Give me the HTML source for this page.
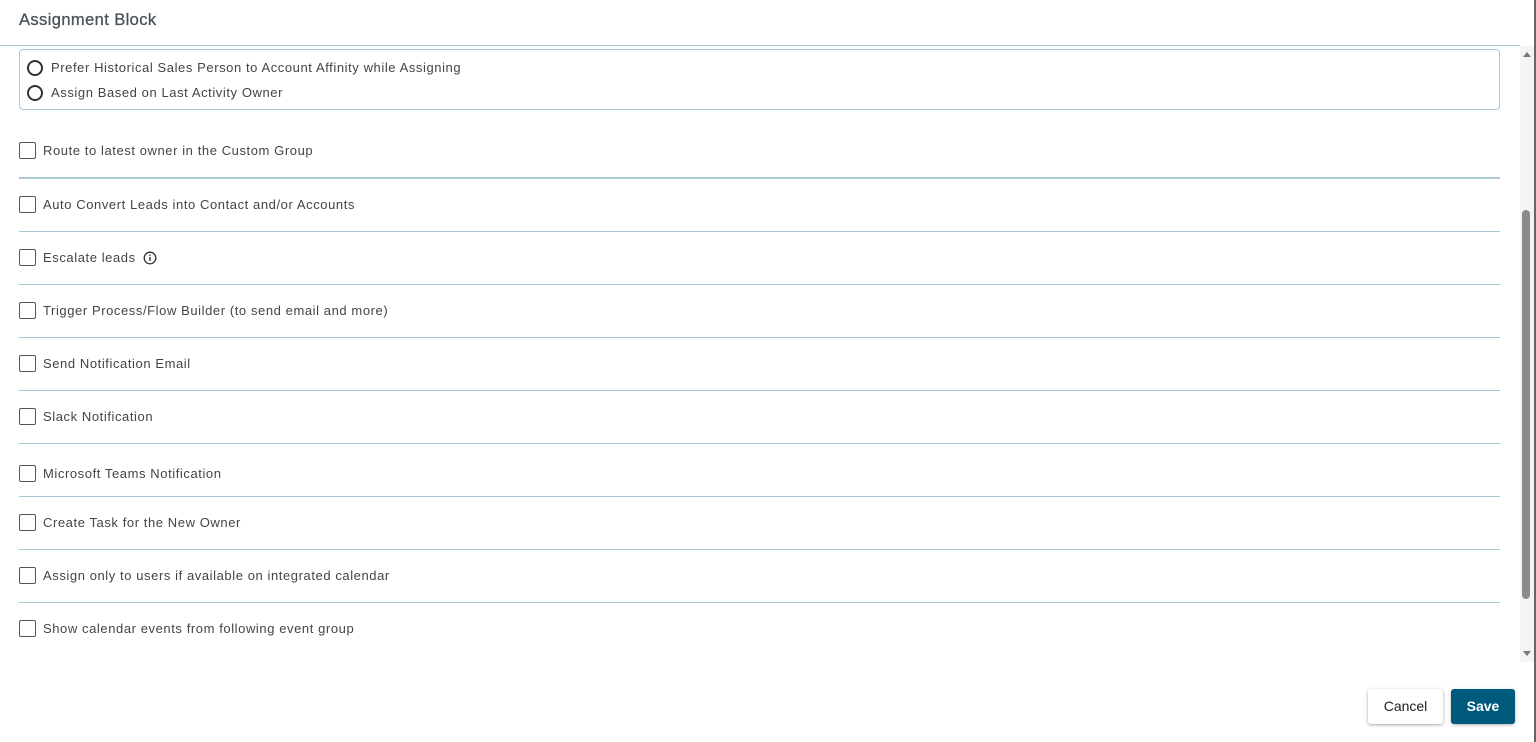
<html><head><style>
body{margin:0;width:1536px;height:742px;background:#fff;font-family:"Liberation Sans",sans-serif;position:relative;overflow:hidden;color:#444}
.a{position:absolute}
.t{font-size:13px;letter-spacing:.58px;color:#444}
.cb{position:absolute;left:19px;width:15px;height:15px;border:1.6px solid #555;border-radius:2px}
.rd{position:absolute;left:27px;width:12px;height:12px;border:2px solid #333;border-radius:50%}
.ln{position:absolute;left:19px;width:1481px;height:1px;background:#a9c9d6}
</style></head><body>
<div class="a" style="left:19px;top:11px;font-size:16.5px;letter-spacing:.4px;color:#4a5358;-webkit-text-stroke:.3px #4a5358">Assignment Block</div>
<div class="a" style="left:0;top:45px;width:1520px;height:1px;background:#a9c9d6"></div>
<div class="a" style="left:19px;top:49px;width:1479px;height:59px;border:1px solid #a9c9d6;border-radius:4px"></div>
<div class="rd" style="top:60px"></div><div class="a t" style="left:51px;top:60px">Prefer Historical Sales Person to Account Affinity while Assigning</div>
<div class="rd" style="top:85px"></div><div class="a t" style="left:51px;top:85px">Assign Based on Last Activity Owner</div>

<div class="cb" style="top:142px"></div><div class="a t" style="left:43px;top:143px">Route to latest owner in the Custom Group</div>
<div class="ln" style="top:177px;height:2px"></div>
<div class="cb" style="top:196px"></div><div class="a t" style="left:43px;top:197px">Auto Convert Leads into Contact and/or Accounts</div>
<div class="ln" style="top:231px"></div>
<div class="cb" style="top:249px"></div><div class="a t" style="left:43px;top:250px">Escalate leads</div>
<svg class="a" style="left:143px;top:251px" width="14" height="14" viewBox="0 0 14 14"><circle cx="7" cy="7" r="5.8" fill="none" stroke="#333" stroke-width="1.3"/><rect x="6.3" y="6" width="1.4" height="4" fill="#333"/><rect x="6.3" y="3.6" width="1.4" height="1.4" fill="#333"/></svg>
<div class="ln" style="top:284px"></div>
<div class="cb" style="top:302px"></div><div class="a t" style="left:43px;top:303px">Trigger Process/Flow Builder (to send email and more)</div>
<div class="ln" style="top:337px"></div>
<div class="cb" style="top:355px"></div><div class="a t" style="left:43px;top:356px">Send Notification Email</div>
<div class="ln" style="top:390px"></div>
<div class="cb" style="top:408px"></div><div class="a t" style="left:43px;top:409px">Slack Notification</div>
<div class="ln" style="top:443px"></div>
<div class="cb" style="top:465px"></div><div class="a t" style="left:43px;top:466px">Microsoft Teams Notification</div>
<div class="ln" style="top:496px"></div>
<div class="cb" style="top:514px"></div><div class="a t" style="left:43px;top:515px">Create Task for the New Owner</div>
<div class="ln" style="top:549px"></div>
<div class="cb" style="top:567px"></div><div class="a t" style="left:43px;top:568px">Assign only to users if available on integrated calendar</div>
<div class="ln" style="top:602px"></div>
<div class="cb" style="top:620px"></div><div class="a t" style="left:43px;top:621px">Show calendar events from following event group</div>

<div class="a" style="left:1520px;top:46px;width:14px;height:616px;background:#f4f4f4"></div>
<div class="a" style="left:1523px;top:52px;width:0;height:0;border-left:4px solid transparent;border-right:4px solid transparent;border-bottom:5px solid #777"></div>
<div class="a" style="left:1523px;top:651px;width:0;height:0;border-left:4px solid transparent;border-right:4px solid transparent;border-top:5px solid #777"></div>
<div class="a" style="left:1522px;top:210px;width:8px;height:389px;background:#8a8a8a;border-radius:4px"></div>
<div class="a" style="left:1534px;top:0;width:2px;height:742px;background:#666"></div>

<div class="a" style="left:1368px;top:689px;width:75px;height:35px;background:#fff;border-radius:3px;box-shadow:0 1px 3px rgba(0,0,0,.35);font-size:14px;color:#222;text-align:center;line-height:35px">Cancel</div>
<div class="a" style="left:1451px;top:689px;width:64px;height:35px;background:#005a7e;border-radius:3px;box-shadow:0 1px 3px rgba(0,0,0,.3);font-size:14px;font-weight:bold;color:#fff;text-align:center;line-height:35px">Save</div>
</body></html>
